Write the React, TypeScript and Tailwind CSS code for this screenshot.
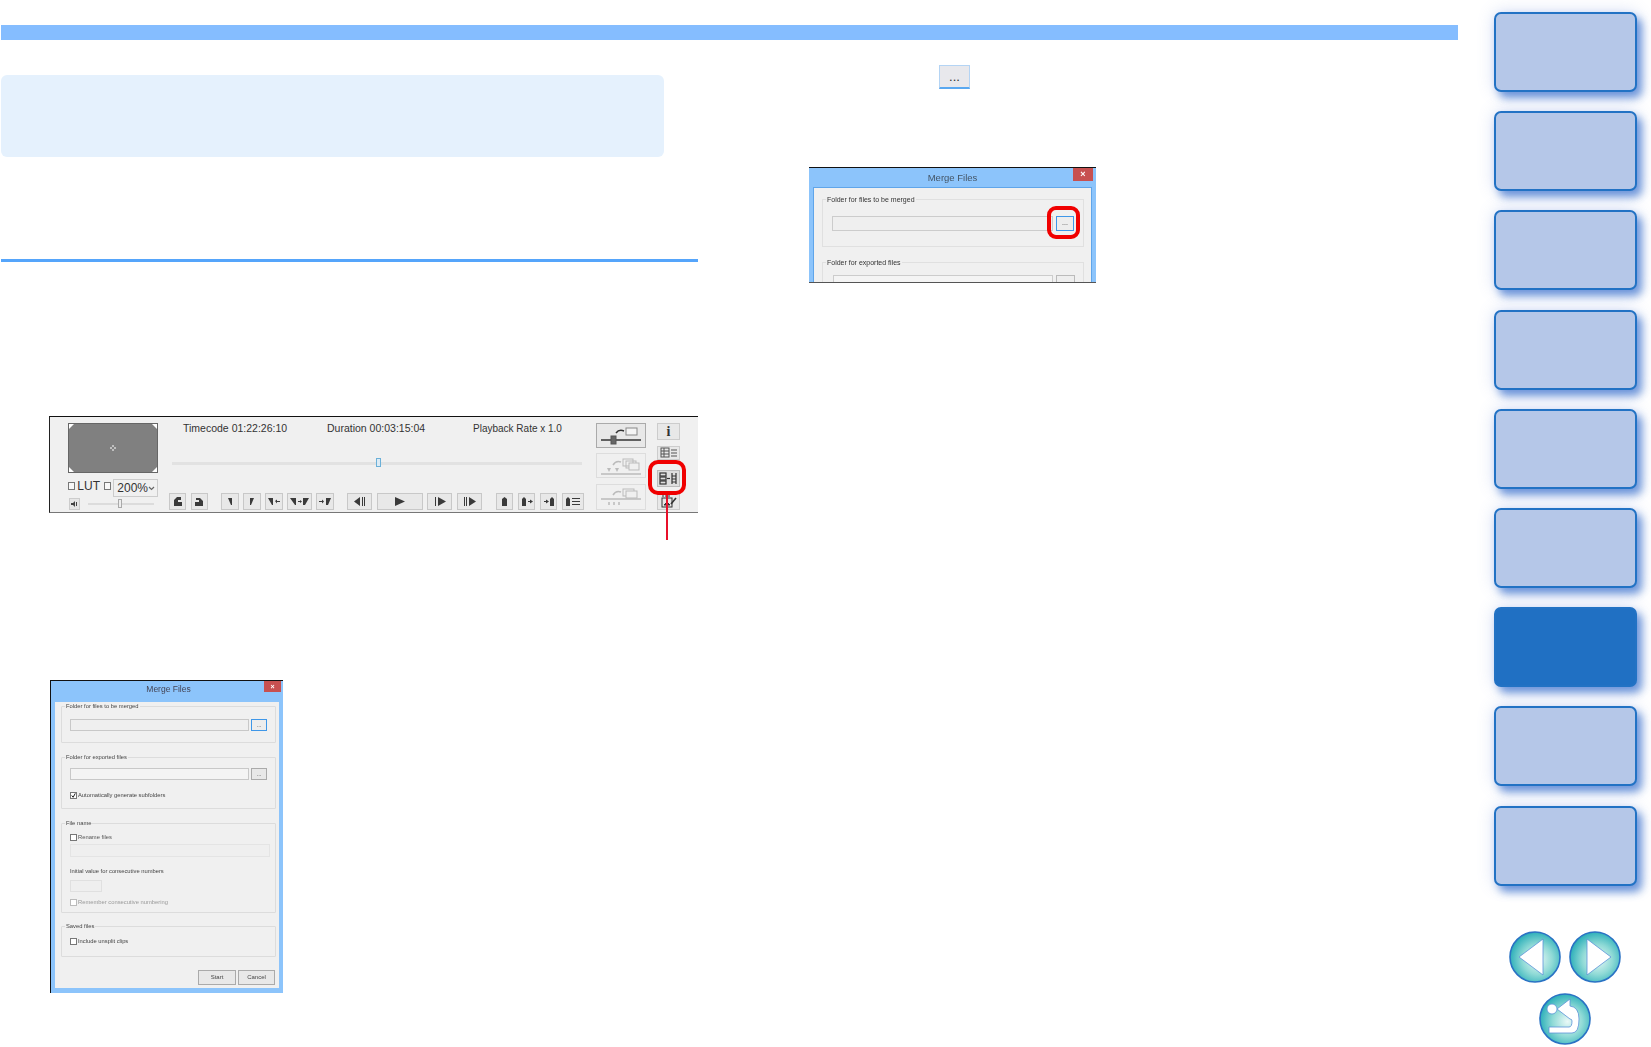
import React from "react";

const Btn = ({ className, children }: { className: string; children?: React.ReactNode }) => (
  <div className={`flex h-[17px] shrink-0 items-center justify-center border border-[#c8c8c8] bg-[#e8e8e8] ${className}`}>
    {children}
  </div>
);

// small black glyphs of the player toolbar
const Glyph = ({ d, w = 14 }: { d: string; w?: number }) => (
  <svg width={w} height="11" viewBox={`0 0 ${w} 11`} fill="#3a3a3a">
    <path d={d} />
  </svg>
);

const Check = ({ className = "", checked = false }: { className?: string; checked?: boolean }) => (
  <div className={`flex size-[7px] shrink-0 items-center justify-center border border-[#777] bg-white ${className}`}>
    {checked && (
      <svg width="7" height="7" viewBox="0 0 7 7" fill="none" stroke="#222" strokeWidth="1.4">
        <path d="M1 3.5 L3 6 L6 0.5" />
      </svg>
    )}
  </div>
);

const Group = ({ label, className, children }: { label: string; className: string; children?: React.ReactNode }) => (
  <div className={`relative ml-[6px] mr-[3px] rounded-[1px] border border-[#dcdcdc] pl-[8px] ${className}`}>
    <span className="absolute -top-[4px] left-[3px] bg-[#f0f0f0] px-px text-[5.8px] leading-[7px] text-[#444]">{label}</span>
    {children}
  </div>
);

const MergeDialog = () => (
  <div className="ml-[49px] mt-[167px] flex h-[313px] w-[233px] flex-col border-l border-t border-[#111] bg-[#8cc4fb] blur-[0.25px]">
    <div className="relative h-[21px] shrink-0">
      <div className="pl-[3px] pt-[2px] text-center text-[8.5px] leading-[12px] text-[#445]">Merge Files</div>
      <div className="absolute right-[2px] top-0 flex h-[11px] w-[17px] items-center justify-center bg-[#c75050] text-[7px] leading-none font-bold text-white">
        ×
      </div>
    </div>
    <div className="mx-[4px] h-[286px] bg-[#f0f0f0] pt-[4px]">
      <Group label="Folder for files to be merged" className="h-[37px] pt-[12px]">
        <div className="flex gap-[2px]">
          <div className="h-[12px] w-[179px] shrink-0 border border-[#c8c8c8] bg-[#efefef]" />
          <div className="flex h-[12px] w-[16px] shrink-0 items-center justify-center border border-[#3f97e8] bg-[#ededed] text-[6px] text-[#333]">...</div>
        </div>
      </Group>
      <Group label="Folder for exported files" className="mt-[14px] h-[52px] pt-[10px]">
        <div className="flex gap-[2px]">
          <div className="h-[12px] w-[179px] shrink-0 border border-[#c8c8c8] bg-[#f4f4f4]" />
          <div className="flex h-[12px] w-[16px] shrink-0 items-center justify-center border border-[#aaa] bg-[#e8e8e8] text-[6px] text-[#333]">...</div>
        </div>
        <div className="mt-[12px] flex items-center gap-[1px] text-[5.8px] leading-[7px] text-[#444]">
          <Check checked /> Automatically generate subfolders
        </div>
      </Group>
      <Group label="File name" className="mt-[14px] h-[90px] pt-[10px]">
        <div className="flex items-center gap-[1px] text-[5.8px] leading-[7px] text-[#555]">
          <Check /> Rename files
        </div>
        <div className="mt-[3px] h-[13px] w-[200px] border border-[#e4e4e4] bg-[#efefef]" />
        <div className="mt-[11px] text-[5.8px] leading-[7px] text-[#444]">Initial value for consecutive numbers</div>
        <div className="mt-[5px] h-[12px] w-[32px] border border-[#e0e0e0] bg-[#efefef]" />
        <div className="mt-[7px] flex items-center gap-[1px] text-[5.8px] leading-[7px] text-[#999]">
          <Check className="border-[#bbb] bg-[#ddd]" /> Remember consecutive numbering
        </div>
      </Group>
      <Group label="Saved files" className="mt-[13px] h-[31px] pt-[11px]">
        <div className="flex items-center gap-[1px] text-[5.8px] leading-[7px] text-[#444]">
          <Check /> Include unsplit clips
        </div>
      </Group>
      <div className="mr-[4px] mt-[13px] flex justify-end gap-[2px]">
        <div className="flex h-[15px] w-[38px] items-center justify-center border border-[#aaa] bg-[#e8e8e8] text-[6px] text-[#444]">Start</div>
        <div className="flex h-[15px] w-[37px] items-center justify-center border border-[#aaa] bg-[#e8e8e8] text-[6px] text-[#444]">Cancel</div>
      </div>
    </div>
  </div>
);

const RightDialog = () => (
  <div className="relative ml-[111px] mt-[78px] h-[116px] w-[287px] overflow-hidden border-y border-t-[#111] border-b-[#555] bg-[#8cc4fb] blur-[0.2px]">
    <div className="relative h-[19px]">
      <div className="pt-[4px] text-center text-[9.5px] leading-[12px] text-[#456]">Merge Files</div>
      <div className="absolute right-[3px] top-0 flex h-[13px] w-[20px] items-center justify-center bg-[#c75050] text-[9px] leading-none font-bold text-white">×</div>
    </div>
    <div className="mx-[4px] h-[100px] border border-[#5fa5ea] bg-[#f0f0f0] pl-[8px] pr-[7px] pt-[11px]">
      <div className="relative h-[48px] border border-[#e0e0e0] pl-[9px] pt-[16px]">
        <span className="absolute -top-[5px] left-[3px] bg-[#f0f0f0] px-[1px] text-[7px] leading-[9px] text-[#333]">Folder for files to be merged</span>
        <div className="flex gap-[3px]">
          <div className="h-[15px] w-[221px] shrink-0 border border-[#ccc] bg-[#efefef]" />
          <div className="flex h-[15px] w-[18px] shrink-0 items-center justify-center border border-[#3f97e8] bg-[#ededed] text-[7px] text-[#333]">...</div>
        </div>
      </div>
      <div className="relative mt-[15px] h-[40px] border border-[#e0e0e0] pl-[10px] pt-[12px]">
        <span className="absolute -top-[5px] left-[3px] bg-[#f0f0f0] px-[1px] text-[7px] leading-[9px] text-[#333]">Folder for exported files</span>
        <div className="flex gap-[3px]">
          <div className="h-[15px] w-[220px] shrink-0 border border-[#ccc] bg-[#f4f4f4]" />
          <div className="h-[15px] w-[19px] shrink-0 border border-[#bbb] bg-[#eee]" />
        </div>
      </div>
    </div>
    <div className="absolute left-[238px] top-[38px] h-[33px] w-[33px] rounded-[9px] border-[4px] border-[#f00000]" />
  </div>
);

const Toolbar = () => (
  <div className="relative ml-[48px] mt-[154px] flex h-[97px] w-[649px] border-b border-l border-t border-b-[#777] border-l-[#222] border-t-[#111] bg-[#f0f0f0] pl-[18px] pt-[6px] text-[#333] blur-[0.2px]">
    {/* preview and zoom */}
    <div className="w-[90px] shrink-0">
      <div className="relative flex h-[50px] items-center justify-center border border-[#666] bg-[#808080]">
        <span className="absolute left-0 top-0 size-0 border-r-[5px] border-t-[5px] border-r-transparent border-t-white" />
        <span className="absolute right-0 top-0 size-0 border-l-[5px] border-t-[5px] border-l-transparent border-t-white" />
        <span className="absolute bottom-0 left-0 size-0 border-b-[5px] border-r-[5px] border-b-white border-r-transparent" />
        <span className="absolute bottom-0 right-0 size-0 border-b-[5px] border-l-[5px] border-b-white border-l-transparent" />
        <svg width="6" height="6" viewBox="0 0 6 6" fill="none" stroke="#fff" strokeWidth="1">
          <path d="M3 0 V2 M3 4 V6 M0 3 H2 M4 3 H6" />
        </svg>
      </div>
      <div className="mt-[6px] flex h-[18px] items-start">
        <div className="mt-[3px] size-[8px] border border-[#777] bg-[#f8f8f8]" />
        <span className="ml-[2px] text-[12px] leading-[14px]">LUT</span>
        <div className="ml-[4px] mt-[3px] size-[8px] border border-[#777] bg-[#f8f8f8]" />
        <div className="ml-[2px] flex h-[18px] w-[46px] items-center justify-between border border-[#ccc] pl-[3px] pr-[2px] text-[12px]">
          200%
          <svg width="7" height="5" viewBox="0 0 7 5" fill="none" stroke="#666" strokeWidth="1.2">
            <path d="M1 1 L3.5 3.5 L6 1" />
          </svg>
        </div>
      </div>
      <div className="mt-px flex items-center">
        <div className="ml-px flex h-[12px] w-[11px] items-center justify-center border border-[#ccc] bg-[#e6e6e6]">
          <svg width="8" height="8" viewBox="0 0 8 8" fill="#444">
            <path d="M0 3 H2 L4 1 V7 L2 5 H0 Z M5 2 H6 V6 H5 Z" />
          </svg>
        </div>
        <div className="relative ml-[8px] h-[2px] w-[66px] bg-[#dcdcdc]">
          <div className="absolute -top-[4px] left-[30px] h-[9px] w-[4px] border border-[#aaa] bg-[#eee]" />
        </div>
      </div>
    </div>

    {/* timecode, timeline, transport */}
    <div className="-mt-px ml-[11px] w-[416px] shrink-0">
      <div className="flex h-[13px] text-[10.5px] leading-[13px]">
        <span className="ml-[14px] w-[144px]">Timecode 01:22:26:10</span>
        <span className="w-[146px]">Duration 00:03:15:04</span>
        <span className="text-[10px]">Playback Rate x 1.0</span>
      </div>
      <div className="relative ml-[3px] mt-[27px] h-[3px] w-[410px] bg-[#e2e2e2]">
        <div className="absolute -top-[4px] left-[204px] h-[9px] w-[5px] border border-[#6bb0d8] bg-[#dcebf5]" />
      </div>
      <div className="mt-[28px] flex">
        <Btn className="w-[17px]"><Glyph w={11} d="M2 4 L5 1 H9 V4 H6 V6 H10 V10 H2 Z" /></Btn>
        <Btn className="ml-[5px] w-[17px]"><Glyph w={11} d="M1 6 H5 V4 H2 V2 H6 L9 5 V10 H1 Z" /></Btn>
        <Btn className="ml-[13px] w-[18px]"><Glyph w={8} d="M2 2 H6 V9 H5 Z" /></Btn>
        <Btn className="ml-[4px] w-[18px]"><Glyph w={8} d="M2 2 H6 L3 9 H2 Z" /></Btn>
        <Btn className="ml-[4px] w-[18px]"><Glyph d="M1 2 H6 V9 H5 Z M8 5 L10 3.5 V5 H13 V6 H10 V7.5 Z" /></Btn>
        <Btn className="ml-[4px] w-[25px]"><Glyph w={21} d="M1 2 H7 V9 H6 Z M9 5 H11 V4 L13 5.5 L11 7 V6 H9 Z M14 2 H20 L16 9 H14 Z" /></Btn>
        <Btn className="ml-[4px] w-[18px]"><Glyph d="M1 5 H4 V3.5 L6 5.5 L4 7.5 V6 H1 Z M8 2 H13 L10 9 H8 Z" /></Btn>
        <Btn className="ml-[13px] w-[25px]"><Glyph d="M1 5.5 L7 1 V10 Z M9 1 H10 V10 H9 Z M11 1 H12 V10 H11 Z" /></Btn>
        <Btn className="ml-[5px] w-[46px]"><Glyph w={12} d="M1 1 L11 5.5 L1 10 Z" /></Btn>
        <Btn className="ml-[4px] w-[25px]"><Glyph d="M2 1 H3 V10 H2 Z M5 1 L13 5.5 L5 10 Z" /></Btn>
        <Btn className="ml-[5px] w-[25px]"><Glyph d="M1 1 H2 V10 H1 Z M3 1 H4 V10 H3 Z M6 1 L13 5.5 L6 10 Z" /></Btn>
      </div>
    </div>

    {/* clip buttons beside the transport */}
    <div className="absolute left-[446px] top-[76px] flex">
      <Btn className="w-[17px]"><Glyph w={7} d="M1 3 L3.5 1 L6 3 V10 H1 Z" /></Btn>
      <Btn className="ml-[5px] w-[17px]"><Glyph w={12} d="M1 3 L3 1 L5 3 V10 H1 Z M7 5 H9 V3.5 L12 5.5 L9 7.5 V6 H7 Z" /></Btn>
      <Btn className="ml-[5px] w-[17px]"><Glyph w={12} d="M1 5 H3 V3.5 L6 5.5 L3 7.5 V6 H1 Z M7 3 L9 1 L11 3 V10 H7 Z" /></Btn>
      <Btn className="ml-[5px] w-[22px]"><Glyph w={16} d="M1 3 L3 1 L5 3 V10 H1 Z M7 2 H15 V3 H7 Z M7 5 H15 V6 H7 Z M7 8 H15 V9 H7 Z" /></Btn>
    </div>

    {/* mode buttons */}
    <div className="absolute left-[546px] top-[6px] flex w-[50px] flex-col">
      <div className="flex h-[25px] items-center justify-center border border-[#aaa] bg-[#e8e8e8]">
        <svg width="44" height="20" viewBox="0 0 44 20" fill="none" stroke="#333">
          <path d="M2 14 H42" strokeWidth="1.5" />
          <rect x="12" y="10" width="5" height="8" fill="#666" stroke="#555" />
          <rect x="27" y="2" width="11" height="7" fill="#f4f4f4" stroke="#888" />
          <path d="M17 7 Q20 3 25 5" strokeWidth="1.5" />
        </svg>
      </div>
      <div className="mt-[5px] flex h-[25px] items-center justify-center border border-[#ddd]">
        <svg width="44" height="20" viewBox="0 0 44 20" fill="none" stroke="#bbb">
          <path d="M2 18 H42" strokeWidth="1.5" />
          <rect x="24" y="3" width="10" height="7" />
          <rect x="27" y="5" width="10" height="7" />
          <rect x="30" y="7" width="10" height="7" fill="#f0f0f0" />
          <path d="M14 9 Q17 4 22 6" strokeWidth="1.5" />
          <path d="M8 12 L12 12 L10 16 Z M16 12 L20 12 L18 16 Z" fill="#bbb" stroke="none" />
        </svg>
      </div>
      <div className="mt-[6px] flex h-[26px] items-center justify-center border border-[#ddd]">
        <svg width="44" height="20" viewBox="0 0 44 20" fill="none" stroke="#bbb">
          <path d="M2 12 H42" strokeWidth="1.5" />
          <rect x="24" y="2" width="11" height="7" />
          <rect x="27" y="4" width="11" height="7" fill="#f0f0f0" />
          <path d="M14 8 Q17 3 22 5" strokeWidth="1.5" />
          <path d="M10 15 V18 M15 15 V18 M20 15 V18" strokeWidth="1.5" />
        </svg>
      </div>
    </div>

    {/* info and list buttons */}
    <div className="absolute left-[607px] top-[6px] flex w-[23px] flex-col">
      <div className="flex h-[17px] items-center justify-center border border-[#ccc] bg-[#e8e8e8] font-['Liberation_Serif',serif] text-[14px] leading-none font-bold">i</div>
      <div className="mt-[6px] flex h-[14px] items-center justify-center border border-[#ccc] bg-[#e8e8e8]">
        <svg width="18" height="12" viewBox="0 0 18 12" fill="none" stroke="#555">
          <rect x="1" y="1" width="8" height="9" />
          <path d="M1 4 H9 M1 7 H9 M4 1 V10 M11 3 H17 M11 6 H17 M11 9 H17" />
        </svg>
      </div>
      <div className="mt-[10px] flex h-[17px] items-center justify-center border border-[#bbb] bg-[#dedede]">
        <svg width="19" height="13" viewBox="0 0 19 13" fill="none" stroke="#333" strokeWidth="1.2">
          <rect x="1" y="1" width="6" height="3" />
          <rect x="1" y="5" width="6" height="3" />
          <rect x="1" y="9" width="6" height="3" />
          <path d="M8 6.5 H11" />
          <path d="M13 1 V12 M17 1 V12 M13 4 H17 M13 7 H17 M13 10 H17" />
        </svg>
      </div>
      <div className="mt-[5px] flex h-[18px] items-center justify-center border border-[#ccc] bg-[#e8e8e8]">
        <svg width="17" height="14" viewBox="0 0 17 14" fill="none" stroke="#333">
          <rect x="2" y="4" width="10" height="9" />
          <path d="M3 1 V3 M6 1 V3 M9 1 V3" />
          <path d="M4 11 L7 8 L10 11 Z" fill="#333" />
          <path d="M11 10 L16 4" strokeWidth="1.6" />
        </svg>
      </div>
    </div>

    {/* callout */}
    <div className="absolute left-[598px] top-[43px] h-[35px] w-[38px] rounded-[10px] border-[4px] border-[#f00000]" />
    <div className="absolute left-[616px] top-[78px] h-[45px] w-[2px] bg-[#e8102a]" />
  </div>
);

const SideCard = ({ active = false }: { active?: boolean }) => (
  <div
    className={`h-[80px] w-[143px] shrink-0 rounded-[7px] border-2 border-[#2272c4] shadow-[5px_6px_9px_rgba(40,100,200,0.65),0_0_16px_rgba(110,140,220,0.3)] ${
      active ? "bg-[#2070c3]" : "bg-[#b5c7e8]"
    }`}
  />
);

const Round = ({ id, children }: { id: string; children: React.ReactNode }) => (
  <svg width="52" height="52" viewBox="0 0 52 52">
    <defs>
      <radialGradient id={id} cx="0.55" cy="0.55" r="0.55">
        <stop offset="0" stopColor="#eaf9f7" />
        <stop offset="0.55" stopColor="#8fdad6" />
        <stop offset="1" stopColor="#2fb0ba" />
      </radialGradient>
    </defs>
    <circle cx="26" cy="26" r="25" fill={`url(#${id})`} stroke="#2a72c4" strokeWidth="1.6" />
    {children}
  </svg>
);

export default function App() {
  return (
    <div className="flex h-[1047px] w-[1651px] overflow-hidden bg-white font-['Liberation_Sans',sans-serif]">
      <main className="w-[1458px] shrink-0 pl-px pt-[25px]">
        <div className="h-[15px] bg-[#85bdff]" />
        <div className="flex">
          <div className="w-[697px] shrink-0">
            <div className="mt-[35px] h-[82px] w-[663px] rounded-[6px] bg-[#e5f1fd]" />
            <div className="mt-[102px] h-[3px] w-[697px] bg-[#55a5fb]" />
            <Toolbar />
            <MergeDialog />
          </div>
          <div>
            <div className="ml-[241px] mt-[25px] flex h-[24px] w-[31px] items-center justify-center border border-[#b4d4f4] border-b-2 border-b-[#5aa8f0] bg-[#e8e8ec] text-[13px] leading-none text-[#333]">
              ...
            </div>
            <RightDialog />
          </div>
        </div>
      </main>
      <aside className="flex w-[193px] shrink-0 flex-col gap-[19.2px] pl-[36px] pt-[12px]">
        <SideCard />
        <SideCard />
        <SideCard />
        <SideCard />
        <SideCard />
        <SideCard />
        <SideCard active />
        <SideCard />
        <SideCard />
        <div className="ml-[15px] mt-[26px] flex gap-[8px]">
          <Round id="prev">
            <path d="M10 26 L34 8 V44 Z" fill="#fff" stroke="#5b93d8" strokeWidth="0.8" />
          </Round>
          <Round id="next">
            <path d="M42 26 L18 8 V44 Z" fill="#fff" stroke="#5b93d8" strokeWidth="0.8" />
          </Round>
        </div>
        <div className="-mt-[9px] ml-[45px]">
          <Round id="back">
            <circle cx="13" cy="16" r="5" fill="#fff" stroke="#5b93d8" strokeWidth="0.8" />
            <path
              d="M18 16 L31 6 V13 Q40 14 40 26 Q40 40 33 40 H10 V34 H30 Q33 34 33 28 Q33 26 31 26 Z"
              fill="#fff"
              stroke="#5b93d8"
              strokeWidth="0.8"
            />
          </Round>
        </div>
      </aside>
    </div>
  );
}
